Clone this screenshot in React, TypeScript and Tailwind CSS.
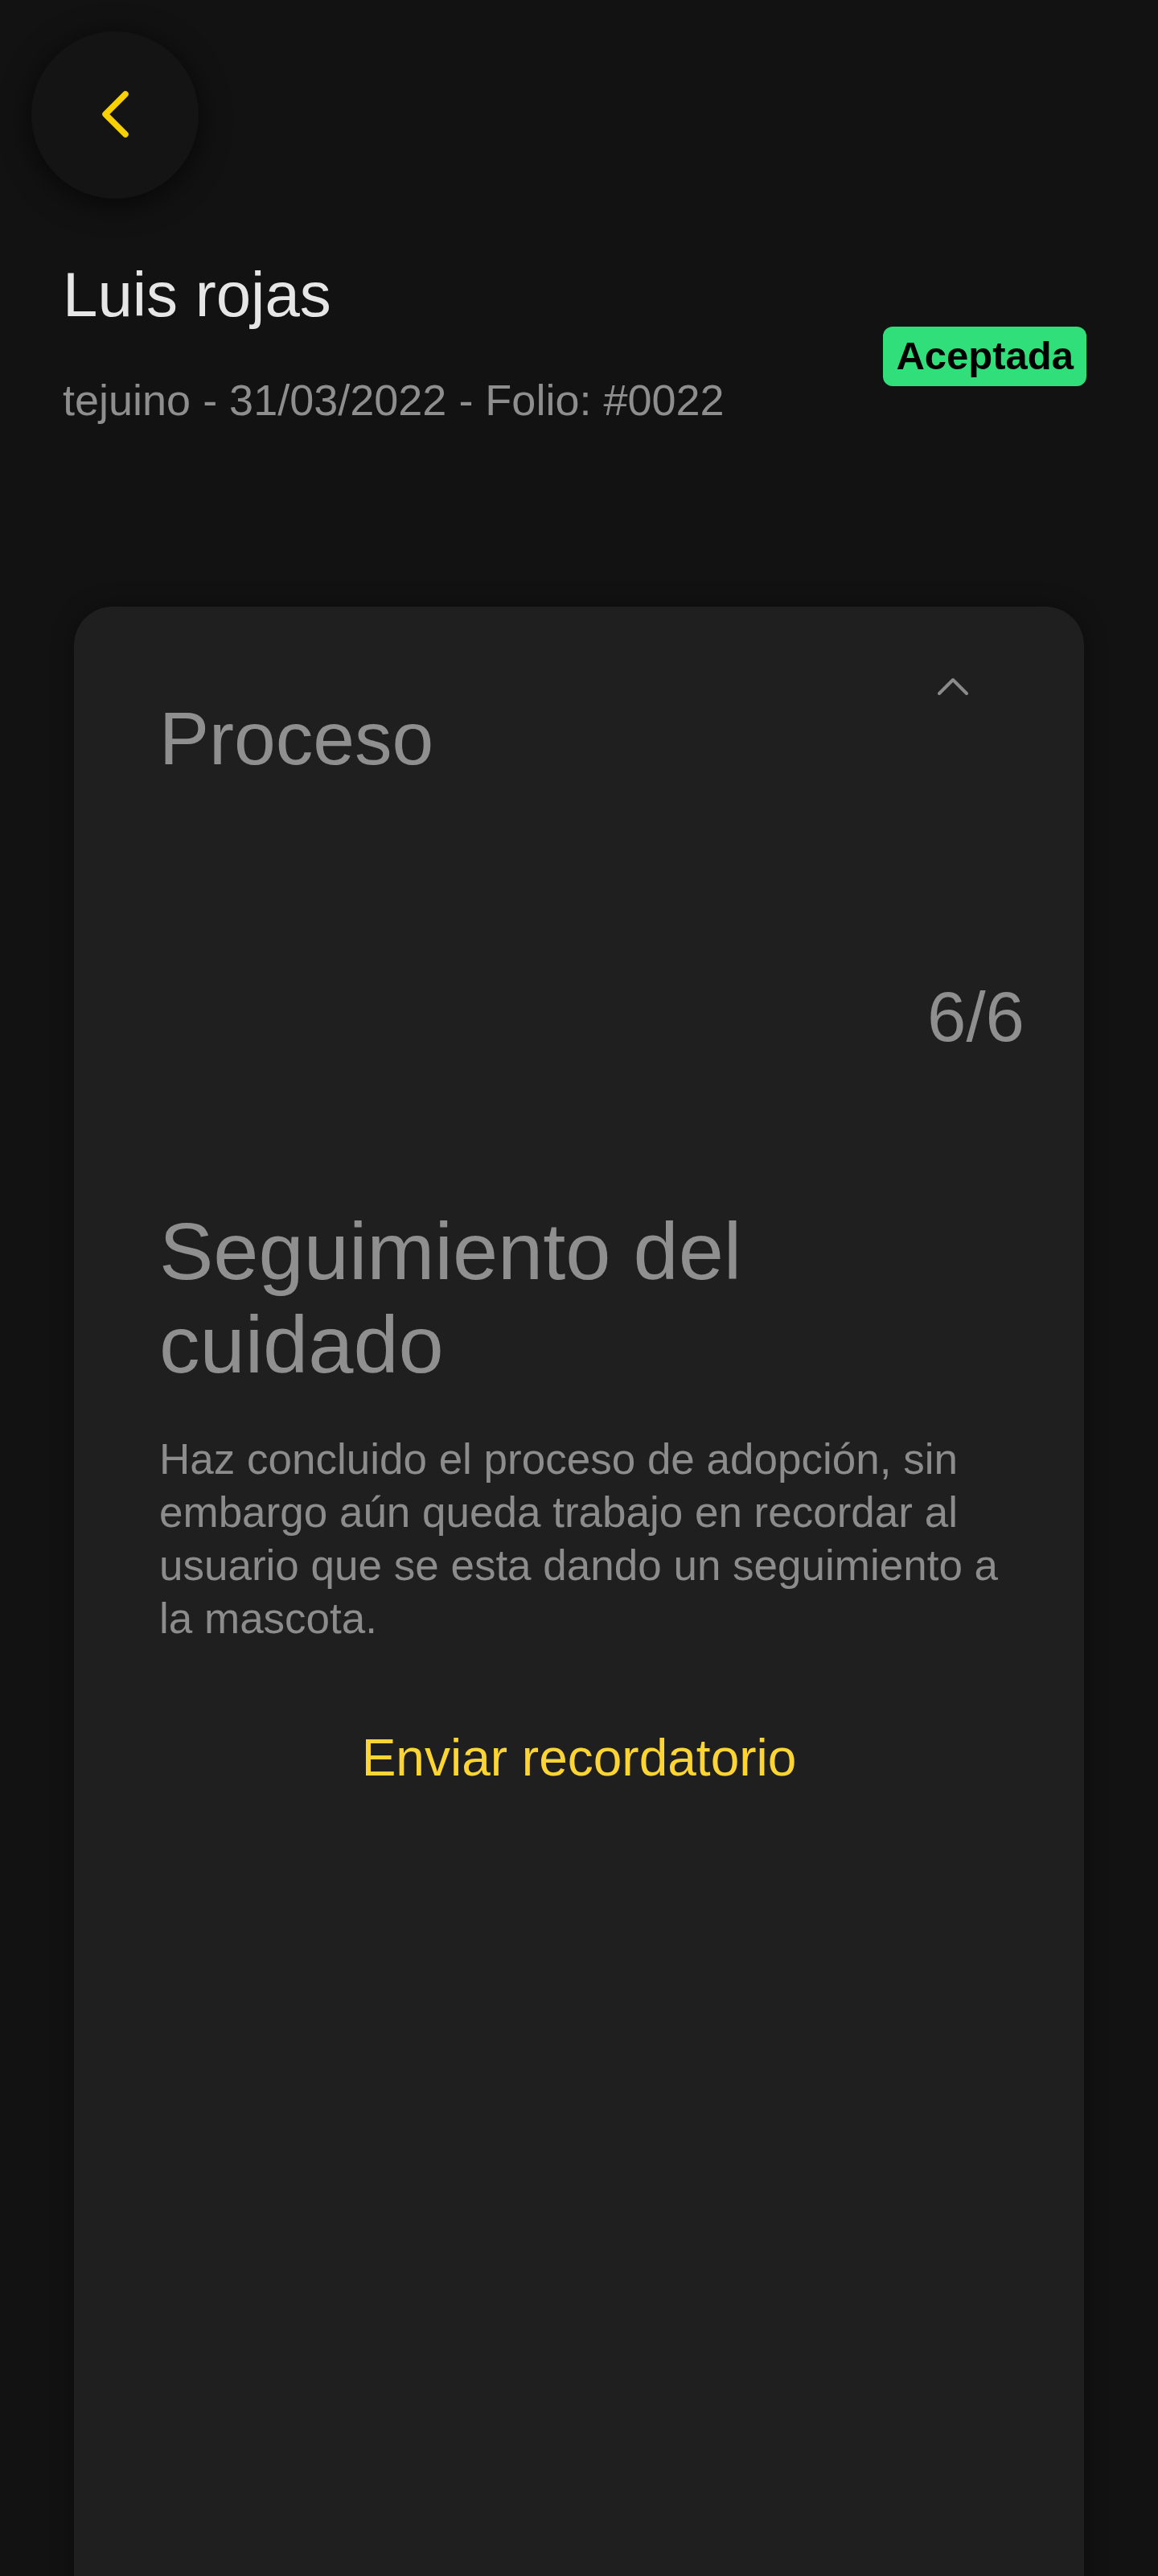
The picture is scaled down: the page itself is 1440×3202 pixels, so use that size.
import React from "react";

export default function App() {
  return (
    <div
      className="w-[1440px] h-[3202px] overflow-hidden bg-[#121212] flex flex-col"
      style={{ fontFamily: '"Liberation Sans", Arial, Helvetica, sans-serif' }}
    >
      {/* Back button */}
      <div className="pl-[39px] pt-[39px]">
        <button className="w-[208px] h-[208px] rounded-full bg-[#141414] shadow-[0_6px_36px_rgba(0,0,0,0.65)] flex items-center justify-center">
          <svg width="40" height="64" viewBox="0 0 40 64" fill="none">
            <path
              d="M33 6 L8 31 L33 56"
              stroke="#f7d000"
              strokeWidth="7.5"
              strokeLinecap="round"
              strokeLinejoin="round"
            />
          </svg>
        </button>
      </div>

      {/* Header */}
      <div className="flex items-center justify-between pl-[78px] pr-[89px] mt-[75px]">
        <div className="flex flex-col">
          <h1 className="text-[78px] leading-[88px] text-[#e6e6e6] font-normal">Luis rojas</h1>
          <p className="mt-[55px] text-[54px] leading-[64px] text-[#8e8e8e]">
            tejuino - 31/03/2022 - Folio: #0022
          </p>
        </div>
        <span className="mt-[34px] h-[74px] px-[16px] rounded-[12px] bg-[#30df7a] text-black text-[49px] font-bold flex items-center leading-none">
          Aceptada
        </span>
      </div>

      {/* Card */}
      <div className="mt-[225px] mx-[92px] h-[2600px] shrink-0 rounded-t-[48px] bg-[#1f1f1f] shadow-[0_0_28px_rgba(0,0,0,0.35)] pt-[88px]">
        <div className="pl-[106px] pr-[70px]">
          <div className="flex items-start justify-between">
            <h2 className="pt-[24px] text-[93px] leading-[104px] text-[#8f8f8f] font-normal">Proceso</h2>
            <svg width="38" height="22" viewBox="0 0 38 22" fill="none" className="mr-[74px]">
              <path
                d="M2 20 L19 3 L36 20"
                stroke="#8a8a8a"
                strokeWidth="4"
                strokeLinecap="round"
                strokeLinejoin="round"
              />
            </svg>
          </div>

          <div className="mt-[246px] mr-[4px] text-right text-[87px] leading-[96px] text-[#8f8f8f]">6/6</div>

          <h3 className="mt-[185px] text-[101px] leading-[116px] text-[#8f8f8f] font-normal">
            Seguimiento del cuidado
          </h3>

          <p className="mt-[52px] text-[53px] leading-[66px] text-[#8c8c8c]">
            Haz concluido el proceso de adopción, sin embargo aún queda trabajo en recordar al usuario que se esta dando un seguimiento a la mascota.
          </p>
        </div>

        <div className="mt-[103px] flex justify-center">
          <button className="text-[64px] leading-[74px] text-[#fcd433]">Enviar recordatorio</button>
        </div>
      </div>
    </div>
  );
}
